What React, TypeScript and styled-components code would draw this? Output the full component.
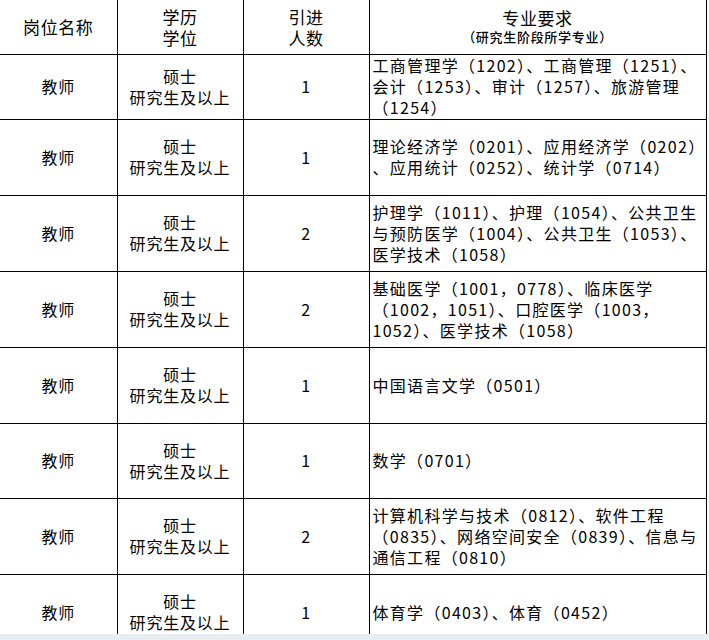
import styled, { createGlobalStyle } from "styled-components";

const GlobalStyle = createGlobalStyle`
    html, body {
        margin: 0;
        padding: 0;
        background: #ffffff;
    }
    body {
        font-family: "Noto Sans CJK SC", "Liberation Sans", sans-serif;
        color: #000;
    }
`;

const Page = styled.div`
    width: 709px;
    height: 640px;
    display: flex;
    flex-direction: column;
    overflow: hidden;
`;

const Viewport = styled.div`
    height: 634px;
    overflow: hidden;
`;

const BottomBar = styled.div`
    height: 6px;
    background: #e8edf2;
`;

const Table = styled.table`
    border-collapse: collapse;
    table-layout: fixed;
    width: 706px;
`;

const Row = styled.tr<{ $h: number }>`
    height: ${(p) => p.$h}px;
`;

const HeadCell = styled.th`
    border: 1px solid #000;
    border-top: none;
    font-weight: 400;
    font-size: 17px;
    line-height: 21px;
    letter-spacing: 0.6px;
    text-align: center;
    vertical-align: middle;
    padding: 0;
    &:first-child {
        border-left: none;
    }
`;

const SubTitle = styled.div`
    font-size: 13px;
    line-height: 18px;
    font-weight: 500;
    letter-spacing: 0.7px;
`;

const Cell = styled.td<{ $left?: boolean }>`
    border: 1px solid #000;
    font-size: 16px;
    line-height: 21px;
    letter-spacing: ${(p) => (p.$left ? "1.3px" : "0.8px")};
    text-align: ${(p) => (p.$left ? "left" : "center")};
    vertical-align: middle;
    padding: ${(p) => (p.$left ? "0 0 0 3px" : "0")};
    white-space: nowrap;
    overflow: hidden;
    &:first-child {
        border-left: none;
    }
`;

const Line = styled.div`
    white-space: nowrap;
`;

type Post = { lines: string[]; count: number; h: number };

const posts: Post[] = [
    { h: 65, count: 1, lines: ["工商管理学（1202）、工商管理（1251）、", "会计（1253）、审计（1257）、旅游管理", "（1254）"] },
    { h: 76, count: 1, lines: ["理论经济学（0201）、应用经济学（0202）", "、应用统计（0252）、统计学（0714）"] },
    { h: 76, count: 2, lines: ["护理学（1011）、护理（1054）、公共卫生", "与预防医学（1004）、公共卫生（1053）、", "医学技术（1058）"] },
    { h: 76, count: 2, lines: ["基础医学（1001，0778）、临床医学", "（1002，1051）、口腔医学（1003，", "1052）、医学技术（1058）"] },
    { h: 76, count: 1, lines: ["中国语言文学（0501）"] },
    { h: 75, count: 1, lines: ["数学（0701）"] },
    { h: 76, count: 2, lines: ["计算机科学与技术（0812）、软件工程", "（0835）、网络空间安全（0839）、信息与", "通信工程（0810）"] },
    { h: 76, count: 1, lines: ["体育学（0403）、体育（0452）"] },
];

export default function App() {
    return (
        <Page>
            <GlobalStyle />
            <Viewport>
                <Table>
                    <colgroup>
                        <col style={{ width: 117 }} />
                        <col style={{ width: 126 }} />
                        <col style={{ width: 126 }} />
                        <col style={{ width: 337 }} />
                    </colgroup>
                    <thead>
                        <Row $h={54}>
                            <HeadCell>岗位名称</HeadCell>
                            <HeadCell>学历<br />学位</HeadCell>
                            <HeadCell>引进<br />人数</HeadCell>
                            <HeadCell>
                                专业要求
                                <SubTitle>（研究生阶段所学专业）</SubTitle>
                            </HeadCell>
                        </Row>
                    </thead>
                    <tbody>
                        {posts.map((p, i) => (
                            <Row key={i} $h={p.h}>
                                <Cell>教师</Cell>
                                <Cell>
                                    <Line>硕士</Line>
                                    <Line>研究生及以上</Line>
                                </Cell>
                                <Cell>{p.count}</Cell>
                                <Cell $left>
                                    {p.lines.map((l, j) => (
                                        <Line key={j}>{l}</Line>
                                    ))}
                                </Cell>
                            </Row>
                        ))}
                    </tbody>
                </Table>
            </Viewport>
            <BottomBar />
        </Page>
    );
}
